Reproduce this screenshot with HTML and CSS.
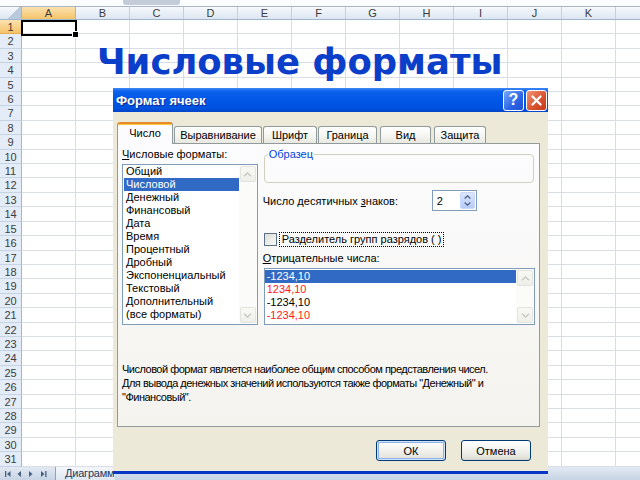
FILE: index.html
```html
<!DOCTYPE html>
<html lang="ru">
<head>
<meta charset="utf-8">
<title>Числовые форматы</title>
<link rel="stylesheet" href="styles.css">
</head>
<body>
<div class="screen">
  <div class="topstrip"><div class="fx-thumb"></div></div>
  <div class="sheet">
    <div class="colheads">
      <div class="corner"></div>
      <div class="ch sel">A</div>
      <div class="ch">B</div>
      <div class="ch">C</div>
      <div class="ch">D</div>
      <div class="ch">E</div>
      <div class="ch">F</div>
      <div class="ch">G</div>
      <div class="ch">H</div>
      <div class="ch">I</div>
      <div class="ch">J</div>
      <div class="ch">K</div>
      <div class="ch last"></div>
    </div>
    <div class="rows">
      <div class="row"><div class="rh sel">1</div><div class="rc"></div></div>
      <div class="row"><div class="rh">2</div><div class="rc"></div></div>
      <div class="row"><div class="rh">3</div><div class="rc"></div></div>
      <div class="row"><div class="rh">4</div><div class="rc"></div></div>
      <div class="row"><div class="rh">5</div><div class="rc"></div></div>
      <div class="row"><div class="rh">6</div><div class="rc"></div></div>
      <div class="row"><div class="rh">7</div><div class="rc"></div></div>
      <div class="row"><div class="rh">8</div><div class="rc"></div></div>
      <div class="row"><div class="rh">9</div><div class="rc"></div></div>
      <div class="row"><div class="rh">10</div><div class="rc"></div></div>
      <div class="row"><div class="rh">11</div><div class="rc"></div></div>
      <div class="row"><div class="rh">12</div><div class="rc"></div></div>
      <div class="row"><div class="rh">13</div><div class="rc"></div></div>
      <div class="row"><div class="rh">14</div><div class="rc"></div></div>
      <div class="row"><div class="rh">15</div><div class="rc"></div></div>
      <div class="row"><div class="rh">16</div><div class="rc"></div></div>
      <div class="row"><div class="rh">17</div><div class="rc"></div></div>
      <div class="row"><div class="rh">18</div><div class="rc"></div></div>
      <div class="row"><div class="rh">19</div><div class="rc"></div></div>
      <div class="row"><div class="rh">20</div><div class="rc"></div></div>
      <div class="row"><div class="rh">21</div><div class="rc"></div></div>
      <div class="row"><div class="rh">22</div><div class="rc"></div></div>
      <div class="row"><div class="rh">23</div><div class="rc"></div></div>
      <div class="row"><div class="rh">24</div><div class="rc"></div></div>
      <div class="row"><div class="rh">25</div><div class="rc"></div></div>
      <div class="row"><div class="rh">26</div><div class="rc"></div></div>
      <div class="row"><div class="rh">27</div><div class="rc"></div></div>
      <div class="row"><div class="rh">28</div><div class="rc"></div></div>
      <div class="row"><div class="rh">29</div><div class="rc"></div></div>
      <div class="row"><div class="rh">30</div><div class="rc"></div></div>
      <div class="row"><div class="rh">31</div><div class="rc"></div></div>
    </div>
  </div>
  <div class="tabbar">
    <svg class="nav" width="52" height="13" viewBox="0 0 52 13">
      <g fill="#46607f">
        <rect x="5" y="4" width="1.3" height="6"/>
        <path d="M10.5 4 L7 7 L10.5 10 Z"/>
        <path d="M21 4 L17.5 7 L21 10 Z"/>
        <path d="M29 4 L32.5 7 L29 10 Z"/>
        <path d="M41 4 L44.5 7 L41 10 Z"/>
        <rect x="45.2" y="4" width="1.3" height="6"/>
      </g>
    </svg>
    <div class="sheettab">Диаграмм</div>
  </div>

  <div class="cursor"></div>
  <h1 class="sheet-title">Числовые форматы</h1>

  <div class="dialog">
    <div class="titlebar">
      <span class="caption">Формат ячеек</span>
      <div class="capbtns">
        <span class="capbtn help">?</span>
        <span class="capbtn close">
          <svg width="19" height="19" viewBox="0 0 19 19"><path d="M5.5 5.5 L13.5 13.5 M13.5 5.5 L5.5 13.5" stroke="#fff" stroke-width="2.4" stroke-linecap="round"/></svg>
        </span>
      </div>
    </div>
    <div class="dbody">
      <div class="tabs">
        <div class="tab active t1">Число</div>
        <div class="tab t2">Выравнивание</div>
        <div class="tab t3">Шрифт</div>
        <div class="tab t4">Граница</div>
        <div class="tab t5">Вид</div>
        <div class="tab t6">Защита</div>
      </div>
      <div class="panel">
        <div class="cols">
          <div class="leftcol">
            <div class="lbl"><u>Ч</u>исловые форматы:</div>
            <div class="listbox fmt">
              <ul class="items">
                <li>Общий</li>
                <li class="selected">Числовой</li>
                <li>Денежный</li>
                <li>Финансовый</li>
                <li>Дата</li>
                <li>Время</li>
                <li>Процентный</li>
                <li>Дробный</li>
                <li>Экспоненциальный</li>
                <li>Текстовый</li>
                <li>Дополнительный</li>
                <li>(все форматы)</li>
              </ul>
              <div class="vscroll">
                <span class="sbtn"><svg width="9" height="5" viewBox="0 0 9 5"><path d="M1 4.2 L4.5 1 L8 4.2" fill="none" stroke="#c9c9c1" stroke-width="1.5"/></svg></span>
                <span class="sbtn"><svg width="9" height="5" viewBox="0 0 9 5"><path d="M1 0.8 L4.5 4 L8 0.8" fill="none" stroke="#c9c9c1" stroke-width="1.5"/></svg></span>
              </div>
            </div>
          </div>
          <div class="rightcol">
            <fieldset class="group"><legend>Образец</legend></fieldset>
            <div class="decrow">
              <span class="declbl">Число десятичных <u>з</u>наков:</span>
              <div class="spin">
                <span class="spinval">2</span>
                <div class="spinbtns">
                  <span class="sb"><svg width="7" height="4" viewBox="0 0 7 4"><path d="M0.7 3.5 L3.5 0.8 L6.3 3.5" fill="none" stroke="#4d6185" stroke-width="1.3"/></svg></span>
                  <span class="sb"><svg width="7" height="4" viewBox="0 0 7 4"><path d="M0.7 0.5 L3.5 3.2 L6.3 0.5" fill="none" stroke="#4d6185" stroke-width="1.3"/></svg></span>
                </div>
              </div>
            </div>
            <div class="chkrow">
              <span class="chk"></span>
              <span class="chklbl">Разделитель групп разрядов ( )</span>
            </div>
            <div class="lbl neg"><u>О</u>трицательные числа:</div>
            <div class="listbox negs">
              <ul class="items">
                <li class="selected">-1234,10</li>
                <li class="red">1234,10</li>
                <li>-1234,10</li>
                <li class="red">-1234,10</li>
              </ul>
              <div class="vscroll">
                <span class="sbtn"><svg width="9" height="5" viewBox="0 0 9 5"><path d="M1 4.2 L4.5 1 L8 4.2" fill="none" stroke="#c9c9c1" stroke-width="1.5"/></svg></span>
                <span class="sbtn"><svg width="9" height="5" viewBox="0 0 9 5"><path d="M1 0.8 L4.5 4 L8 0.8" fill="none" stroke="#c9c9c1" stroke-width="1.5"/></svg></span>
              </div>
            </div>
          </div>
        </div>
        <p class="desc">Числовой формат является наиболее общим способом представления чисел.<br>Для вывода денежных значений используются также форматы "Денежный" и<br>"Финансовый".</p>
      </div>
      <div class="buttons">
        <button class="btn default">ОК</button>
        <button class="btn">Отмена</button>
      </div>
    </div>
  </div>
</div>
</body>
</html>
```

FILE: styles.css
```css
* { box-sizing: border-box; }
body { margin: 0; }

.screen {
  position: relative;
  width: 640px;
  height: 480px;
  overflow: hidden;
  background: #fff;
  font-family: "Liberation Sans", Arial, sans-serif;
  font-size: 11px;
  color: #000;
}

/* ---------- Excel sheet ---------- */
.topstrip {
  height: 7px;
  display: flex;
  background: #fbfcfd;
  border-bottom: 1px solid #a9b5c4;
}
.fx-thumb {
  margin-left: 123px;
  width: 57px;
  height: 5px;
  background: #c3ccd8;
  border-radius: 0 0 3px 3px;
}

.colheads {
  display: flex;
  height: 13px;
  border-bottom: 1px solid #9eb6ce;
  background: linear-gradient(#f6f9fd, #dde6f1);
}
.corner {
  width: 22px;
  border-right: 1px solid #9eb6ce;
  background: linear-gradient(135deg, transparent 58%, #b9c8db 58%);
}
.ch {
  width: 54px;
  border-right: 1px solid #c3d0e0;
  text-align: center;
  line-height: 12px;
  color: #3c3c3c;
}
.ch.sel {
  background: linear-gradient(#fbe2ae, #f4c36a);
  border-right-color: #e7ad4f;
}
.ch.last { flex: 1; border-right: none; }

.row { display: flex; height: 14.42px; }
.rh {
  width: 22px;
  border-right: 1px solid #9eb6ce;
  border-bottom: 1px solid #c6d3e3;
  background: #e4ecf7;
  text-align: center;
  line-height: 14px;
  color: #3c3c3c;
}
.rh.sel { background: linear-gradient(#fbe2ae, #f4c36a); border-bottom-color: #e7ad4f; }
.rc {
  flex: 1;
  border-bottom: 1px solid #d8dde6;
  background: repeating-linear-gradient(to right, #fff 0 53px, #d8dde6 53px 54px);
}

.tabbar {
  height: 13px;
  display: flex;
  align-items: center;
  background: linear-gradient(#e2e9f2, #c7d4e5);
}
.nav { flex: none; }
.sheettab {
  margin-left: 3px;
  height: 13px;
  padding-left: 9px;
  border-left: 1px solid #8fa3bd;
  line-height: 13px;
  font-size: 11px;
  letter-spacing: -0.2px;
  color: #1f3a5f;
  white-space: nowrap;
  background: linear-gradient(#f4f7fb, #dfe7f1);
}

.cursor {
  position: absolute;
  left: 21px;
  top: 20px;
  width: 56px;
  height: 16px;
  border: 2px solid #000;
}
.cursor::after {
  content: "";
  position: absolute;
  right: -4px;
  bottom: -4px;
  width: 5px;
  height: 5px;
  background: #000;
  border: 1px solid #fff;
}

.sheet-title {
  position: absolute;
  left: 97px;
  top: 44px;
  margin: 0;
  font: bold 35.4px/35px "DejaVu Sans", Verdana, sans-serif;
  color: #0b3ec9;
  white-space: nowrap;
}

/* ---------- Dialog ---------- */
.dialog {
  position: absolute;
  left: 113px;
  top: 88px;
  width: 435px;
  height: 386px;
  display: flex;
  flex-direction: column;
  background: #ece9d8;
  border-bottom: 3px solid #0a36c8;
}
.titlebar {
  height: 24px;
  flex: none;
  display: flex;
  align-items: center;
  justify-content: space-between;
  padding: 0 1px 0 3px;
  background: linear-gradient(#3f88f6 0%, #0b61eb 14%, #0056e6 50%, #0052df 85%, #0045c8 100%);
}
.caption {
  color: #fff;
  font: bold 13px "Liberation Sans", Arial, sans-serif;
  text-shadow: 1px 1px 0 #0a2a8f;
}
.capbtns { display: flex; gap: 2px; }
.capbtn {
  width: 21px;
  height: 21px;
  border: 1px solid #fff;
  border-radius: 3px;
  display: flex;
  align-items: center;
  justify-content: center;
}
.help {
  background: linear-gradient(135deg, #78a8fb, #2c63e6 60%, #1e50d0);
  color: #fff;
  font: bold 16px/1 "Liberation Sans", Arial, sans-serif;
}
.close {
  background: linear-gradient(135deg, #f29576, #da5532 55%, #c23a1a);
}

.dbody {
  flex: 1;
  display: flex;
  flex-direction: column;
  padding: 10px 8px 0 4px;
}

.tabs {
  display: flex;
  align-items: flex-end;
  height: 22px;
  margin-bottom: -1px;
  position: relative;
  z-index: 1;
}
.tab {
  height: 17px;
  margin-bottom: 1px;
  border: 1px solid #919b9c;
  border-bottom: none;
  border-radius: 3px 3px 0 0;
  background: linear-gradient(#ffffff, #f4f4f0 60%, #e8e7e0);
  text-align: center;
  line-height: 16px;
  white-space: nowrap;
}
.tab.active {
  height: 22px;
  margin-bottom: 0;
  border-top: 2px solid #e68b2c;
  box-shadow: inset 0 1px 0 #ffc83c;
  background: #fcfcfe;
  line-height: 18px;
}
.t1 { width: 56px; }
.t2 { width: 88px; margin-left: 1px; }
.t3 { width: 54px; margin-left: 1px; }
.t4 { width: 59px; margin-left: 1px; }
.t5 { width: 51px; margin-left: 3px; }
.t6 { width: 52px; margin-left: 3px; }

.panel {
  height: 284px;
  flex: none;
  border: 1px solid #919b9c;
  background: linear-gradient(#fcfcfe, #f4f3ee);
  padding: 4px 4px 0 4px;
}
.cols { display: flex; gap: 6px; }
.leftcol { width: 136px; }
.rightcol { width: 272px; }

.lbl { line-height: 13px; height: 13px; white-space: nowrap; }

.listbox {
  display: flex;
  border: 1px solid #7f9db9;
  background: #fff;
  margin-top: 3px;
}
.fmt { height: 161px; }
.negs { height: 57px; }

.items {
  list-style: none;
  margin: 0;
  padding: 0 0 0 1px;
  flex: 1;
  min-width: 0;
}
.negs .items { padding: 1px 0 0 0; }
.items li {
  height: 13px;
  line-height: 13px;
  padding-left: 2px;
  white-space: nowrap;
}
.items li.selected { background: #316ac5; color: #fff; }
.items li.red { color: #ff1a1a; }

.vscroll {
  width: 18px;
  flex: none;
  display: flex;
  flex-direction: column;
  justify-content: space-between;
  padding: 1px;
  background: #fbfbf9;
}
.sbtn {
  height: 16px;
  border: 1px solid #e4e4de;
  border-radius: 2px;
  background: linear-gradient(#f8f8f5, #efefea);
  display: flex;
  align-items: center;
  justify-content: center;
}

.group {
  margin: 0;
  width: 270px;
  height: 35px;
  padding: 0 3px;
  border: 1px solid #d0d0bf;
  border-radius: 4px;
}
.group legend {
  padding: 0 1px;
  line-height: 13px;
  color: #0046d5;
}

.decrow {
  display: flex;
  align-items: center;
  height: 21px;
  margin-top: 7px;
}
.declbl { width: 169px; white-space: nowrap; margin-left: -1px; }
.spin {
  width: 45px;
  height: 21px;
  display: flex;
  align-items: center;
  justify-content: space-between;
  padding: 1px;
  border: 1px solid #7f9db9;
  background: #fff;
}
.spinval { padding-left: 3px; }
.spinbtns {
  width: 15px;
  height: 17px;
  display: flex;
  flex-direction: column;
  border-radius: 2px;
  background: linear-gradient(#dce7fe, #b7cbf8);
  border: 1px solid #c9d8fa;
}
.sb {
  flex: 1;
  display: flex;
  align-items: center;
  justify-content: center;
}

.chkrow {
  display: flex;
  align-items: center;
  height: 15px;
  margin-top: 21px;
}
.chk {
  width: 13px;
  height: 13px;
  border: 1px solid #5b7089;
  background: linear-gradient(135deg, #dcdcd6, #fbfbf9);
}
.chklbl {
  margin-left: 2px;
  padding: 0 2px;
  border: 1px dotted #000;
  line-height: 13px;
  white-space: nowrap;
}

.lbl.neg { margin-top: 5px; margin-left: -1px; }

.desc {
  margin: 37px 0 0 0;
  line-height: 14px;
  letter-spacing: -0.5px;
  white-space: nowrap;
}

.buttons {
  display: flex;
  justify-content: flex-end;
  gap: 15px;
  margin-top: 13px;
  padding-right: 9px;
}
.btn {
  width: 70px;
  height: 21px;
  padding: 0;
  border: 1px solid #003c74;
  border-radius: 3px;
  background: linear-gradient(#ffffff, #f5f5f1 40%, #e6e5de 85%, #d7d2c7);
  font: 11px "Liberation Sans", Arial, sans-serif;
  color: #000;
}
.btn.default {
  box-shadow: inset 0 0 0 1px #cfe1fb, inset 0 0 0 2px #8fb3e9;
}
```
